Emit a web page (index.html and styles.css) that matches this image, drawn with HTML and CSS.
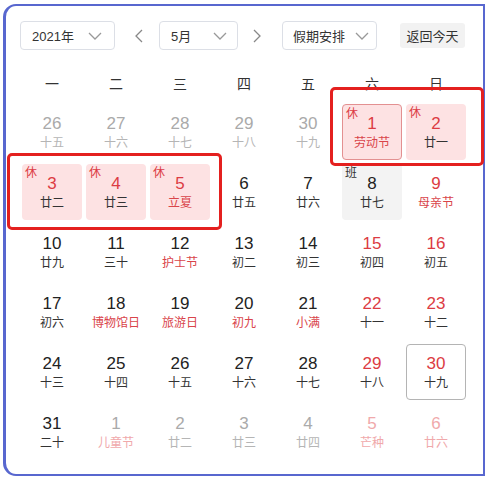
FILE: index.html
```html
<!DOCTYPE html>
<html lang="zh">
<head>
<meta charset="utf-8">
<link rel="stylesheet" href="styles.css">
</head>
<body>
<div class="card">
  <div class="toolbar">
    <div class="select year"><span>2021年</span><svg class="chev" width="14" height="8" viewBox="0 0 14 8"><path d="M1 1 L7 7 L13 1" fill="none" stroke="#999" stroke-width="1.3"/></svg></div>
    <svg class="arrow prev" width="8" height="14" viewBox="0 0 8 14"><path d="M7 1 L1 7 L7 13" fill="none" stroke="#888" stroke-width="1.3"/></svg>
    <div class="select month"><span>5月</span><svg class="chev" width="14" height="8" viewBox="0 0 14 8"><path d="M1 1 L7 7 L13 1" fill="none" stroke="#999" stroke-width="1.3"/></svg></div>
    <svg class="arrow next" width="8" height="14" viewBox="0 0 8 14"><path d="M1 1 L7 7 L1 13" fill="none" stroke="#888" stroke-width="1.3"/></svg>
    <div class="select holiday"><span>假期安排</span><svg class="chev" width="14" height="8" viewBox="0 0 14 8"><path d="M1 1 L7 7 L13 1" fill="none" stroke="#999" stroke-width="1.3"/></svg></div>
    <div class="today-btn">返回今天</div>
  </div>
  <div class="weekdays">
    <span>一</span><span>二</span><span>三</span><span>四</span><span>五</span><span>六</span><span>日</span>
  </div>
  <div class="grid">
    <div class="cell other"><b>26</b><i>十五</i></div>
    <div class="cell other"><b>27</b><i>十六</i></div>
    <div class="cell other"><b>28</b><i>十七</i></div>
    <div class="cell other"><b>29</b><i>十八</i></div>
    <div class="cell other"><b>30</b><i>十九</i></div>
    <div class="cell rest selected red"><em>休</em><b>1</b><i class="fest">劳动节</i></div>
    <div class="cell rest red"><em>休</em><b>2</b><i>廿一</i></div>

    <div class="cell rest red"><em>休</em><b>3</b><i>廿二</i></div>
    <div class="cell rest red"><em>休</em><b>4</b><i>廿三</i></div>
    <div class="cell rest red"><em>休</em><b>5</b><i class="fest">立夏</i></div>
    <div class="cell"><b>6</b><i>廿五</i></div>
    <div class="cell"><b>7</b><i>廿六</i></div>
    <div class="cell work"><em>班</em><b>8</b><i>廿七</i></div>
    <div class="cell red"><b>9</b><i class="fest">母亲节</i></div>

    <div class="cell"><b>10</b><i>廿九</i></div>
    <div class="cell"><b>11</b><i>三十</i></div>
    <div class="cell"><b>12</b><i class="fest">护士节</i></div>
    <div class="cell"><b>13</b><i>初二</i></div>
    <div class="cell"><b>14</b><i>初三</i></div>
    <div class="cell red"><b>15</b><i>初四</i></div>
    <div class="cell red"><b>16</b><i>初五</i></div>

    <div class="cell"><b>17</b><i>初六</i></div>
    <div class="cell"><b>18</b><i class="fest">博物馆日</i></div>
    <div class="cell"><b>19</b><i class="fest">旅游日</i></div>
    <div class="cell"><b>20</b><i class="fest">初九</i></div>
    <div class="cell"><b>21</b><i class="fest">小满</i></div>
    <div class="cell red"><b>22</b><i>十一</i></div>
    <div class="cell red"><b>23</b><i>十二</i></div>

    <div class="cell"><b>24</b><i>十三</i></div>
    <div class="cell"><b>25</b><i>十四</i></div>
    <div class="cell"><b>26</b><i>十五</i></div>
    <div class="cell"><b>27</b><i>十六</i></div>
    <div class="cell"><b>28</b><i>十七</i></div>
    <div class="cell red"><b>29</b><i>十八</i></div>
    <div class="cell red today"><b>30</b><i>十九</i></div>

    <div class="cell"><b>31</b><i>二十</i></div>
    <div class="cell other"><b>1</b><i class="fest">儿童节</i></div>
    <div class="cell other"><b>2</b><i>廿二</i></div>
    <div class="cell other"><b>3</b><i>廿三</i></div>
    <div class="cell other"><b>4</b><i>廿四</i></div>
    <div class="cell other red"><b>5</b><i class="fest">芒种</i></div>
    <div class="cell other red"><b>6</b><i>廿六</i></div>
  </div>
</div>
<div class="mark mark-a"></div>
<div class="mark mark-b"></div>
</body>
</html>
```

FILE: styles.css
```css
html, body {
  margin: 0;
  padding: 0;
  background: #fff;
}
body {
  position: relative;
  width: 486px;
  height: 479px;
  font-family: "Liberation Sans", "Noto Sans CJK SC", sans-serif;
  color: #222;
}
.card {
  box-sizing: border-box;
  margin: 4px 0 0 3px;
  width: 482px;
  height: 472px;
  border: 2px solid #5867cf;
  border-left-width: 3px;
  border-radius: 13px 0 0 13px;
  padding: 15px 0 0 14px;
}
.toolbar {
  display: flex;
  align-items: center;
  height: 29px;
}
.select {
  box-sizing: border-box;
  height: 29px;
  border: 1px solid #dcdfe6;
  border-radius: 4px;
  display: flex;
  align-items: center;
  justify-content: space-between;
  font-size: 13px;
  color: #333;
}
.select.year { width: 95px; padding: 0 12px 0 11px; }
.select.month { width: 79px; padding: 0 10px 0 11px; }
.select.holiday { width: 95px; padding: 0 7px 0 10px; }
.arrow.prev { margin: 0 16px 0 20px; }
.arrow.next { margin: 0 21px 0 15px; }
.today-btn {
  margin-left: 23px;
  height: 25px;
  width: 65px;
  background: #f2f2f2;
  border-radius: 3px;
  font-size: 13px;
  color: #333;
  display: flex;
  align-items: center;
  justify-content: center;
}
.weekdays {
  display: grid;
  grid-template-columns: repeat(7, 60px);
  column-gap: 4px;
  margin: 18px 0 0 2px;
  height: 30px;
  align-items: center;
  font-size: 14px;
  color: #333;
  text-align: center;
}
.grid {
  display: grid;
  grid-template-columns: repeat(7, 60px);
  grid-auto-rows: 56px;
  gap: 4px;
  margin: 6px 0 0 2px;
}
.cell {
  position: relative;
  box-sizing: border-box;
  border-radius: 4px;
  display: flex;
  flex-direction: column;
  align-items: center;
  justify-content: center;
}
.cell b {
  font-weight: normal;
  font-size: 17px;
  line-height: 20px;
  color: #222;
}
.cell i {
  font-style: normal;
  font-size: 12px;
  line-height: 16px;
  color: #333;
  font-family: "Noto Sans CJK SC", sans-serif;
}
.cell em {
  position: absolute;
  left: 3px;
  top: 1px;
  font-style: normal;
  font-size: 12px;
  line-height: 14px;
  font-family: "Noto Sans CJK SC", sans-serif;
}
.cell.red b { color: #dc3c43; }
.cell i.fest { color: #d9444a; }
.cell.rest { background: #fde2e3; }
.cell.rest em { color: #dc3c43; }
.cell.selected { border: 1.5px solid #e39091; }
.cell.work { background: #f3f3f3; }
.cell.work em { color: #333; }
.cell.today { border: 1.5px solid #b4b4b4; }
.cell.other b { color: #aaa; }
.cell.other i { color: #b5b5b5; }
.cell.other i.fest { color: #f0a9ab; }
.cell.other.red b { color: #f0a9ab; }
.cell.other.red i { color: #f0a9ab; }
.mark {
  position: absolute;
  box-sizing: border-box;
  border: 3px solid #e4201f;
  border-radius: 5px;
}
.mark-a { left: 330px; top: 87px; width: 154px; height: 79px; }
.mark-b { left: 7px; top: 153px; width: 215px; height: 77px; }
```
